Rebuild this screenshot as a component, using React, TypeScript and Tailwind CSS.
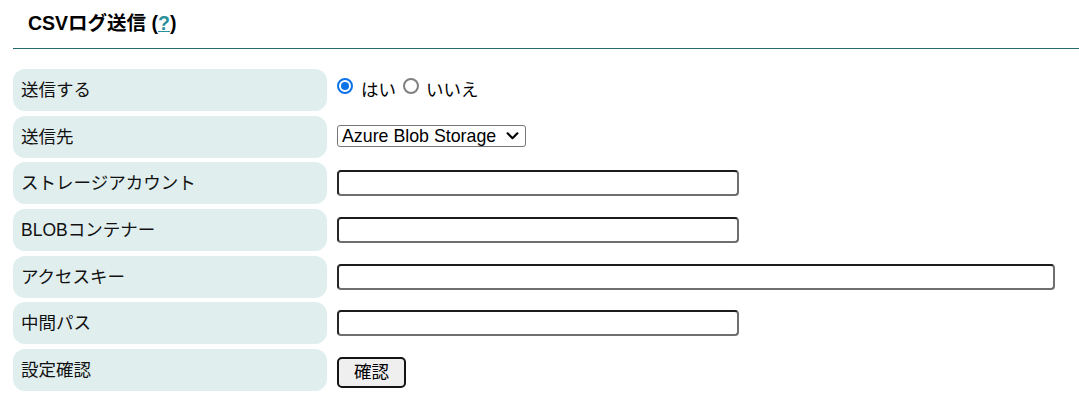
import React from "react";

const font = "font-['Liberation_Sans','Noto_Sans_CJK_JP',sans-serif]";

function Row({ label, children }: { label: string; children: React.ReactNode }) {
  return (
    <div className="flex h-[42px]">
      <div className="flex w-[314px] shrink-0 items-center rounded-[12px] bg-[#e0eeee] pl-2 text-[17.5px] text-[#111]">
        {label}
      </div>
      <div className="ml-[10px] flex flex-1 items-center">{children}</div>
    </div>
  );
}

// テキスト入力（inset風の枠）
function TextBox({ wide }: { wide?: boolean }) {
  return (
    <input
      type="text"
      className={
        "h-[26px] rounded-[4px] border-[2.5px] border-t-[#1c1c1c] border-l-[#262626] border-b-[#6f6f6f] border-r-[#6f6f6f] bg-white px-1 text-[16px] outline-none " +
        (wide ? "w-[718px]" : "w-[402px]")
      }
    />
  );
}

function Radio({ checked }: { checked?: boolean }) {
  return (
    <span
      className={
        "-mt-[8px] flex h-[16px] w-[16px] shrink-0 items-center justify-center rounded-full border-2 bg-white " +
        (checked ? "border-[#0b72e8]" : "border-[#808080]")
      }
    >
      {checked && <span className="h-[8px] w-[8px] rounded-full bg-[#0b72e8]" />}
    </span>
  );
}

export default function App() {
  return (
    <div className={`${font} bg-white pl-[13px] text-black`}>
      <h2 className="flex h-[49px] items-center border-b border-[#226b6b] pl-[15px] text-[19.5px] font-bold">
        CSVログ送信 (
        <a href="#" className="text-[#28909a] underline">
          ?
        </a>
        )
      </h2>

      <div className="mt-[20px] flex flex-col gap-[4.67px] pb-2">
        <Row label="送信する">
          <label className="flex items-center text-[17.5px]">
            <Radio checked />
            <span className="ml-[8px]">はい</span>
          </label>
          <label className="ml-[7px] flex items-center text-[17.5px]">
            <Radio />
            <span className="ml-[7px]">いいえ</span>
          </label>
        </Row>

        <Row label="送信先">
          <div className="relative">
            <select className="h-[22px] w-[189px] appearance-none rounded-[3px] border border-[#767676] bg-white pl-[4px] text-[17.8px] leading-[20px] outline-none">
              <option>Azure Blob Storage</option>
            </select>
            <svg
              viewBox="0 0 14 9"
              className="pointer-events-none absolute right-[7px] top-[7px] h-[8px] w-[13px]"
              fill="none"
              stroke="#000"
              strokeWidth="2.4"
              strokeLinecap="round"
              strokeLinejoin="round"
            >
              <path d="M1.5 1.5l5.5 5.5 5.5-5.5" />
            </svg>
          </div>
        </Row>

        <Row label="ストレージアカウント">
          <TextBox />
        </Row>

        <Row label="BLOBコンテナー">
          <TextBox />
        </Row>

        <Row label="アクセスキー">
          <TextBox wide />
        </Row>

        <Row label="中間パス">
          <TextBox />
        </Row>

        <Row label="設定確認">
          <button className="mt-[5px] h-[31px] w-[69px] rounded-[5px] border-[2.5px] border-[#141414] bg-[#efefef] text-[17.5px]">
            確認
          </button>
        </Row>
      </div>
    </div>
  );
}
